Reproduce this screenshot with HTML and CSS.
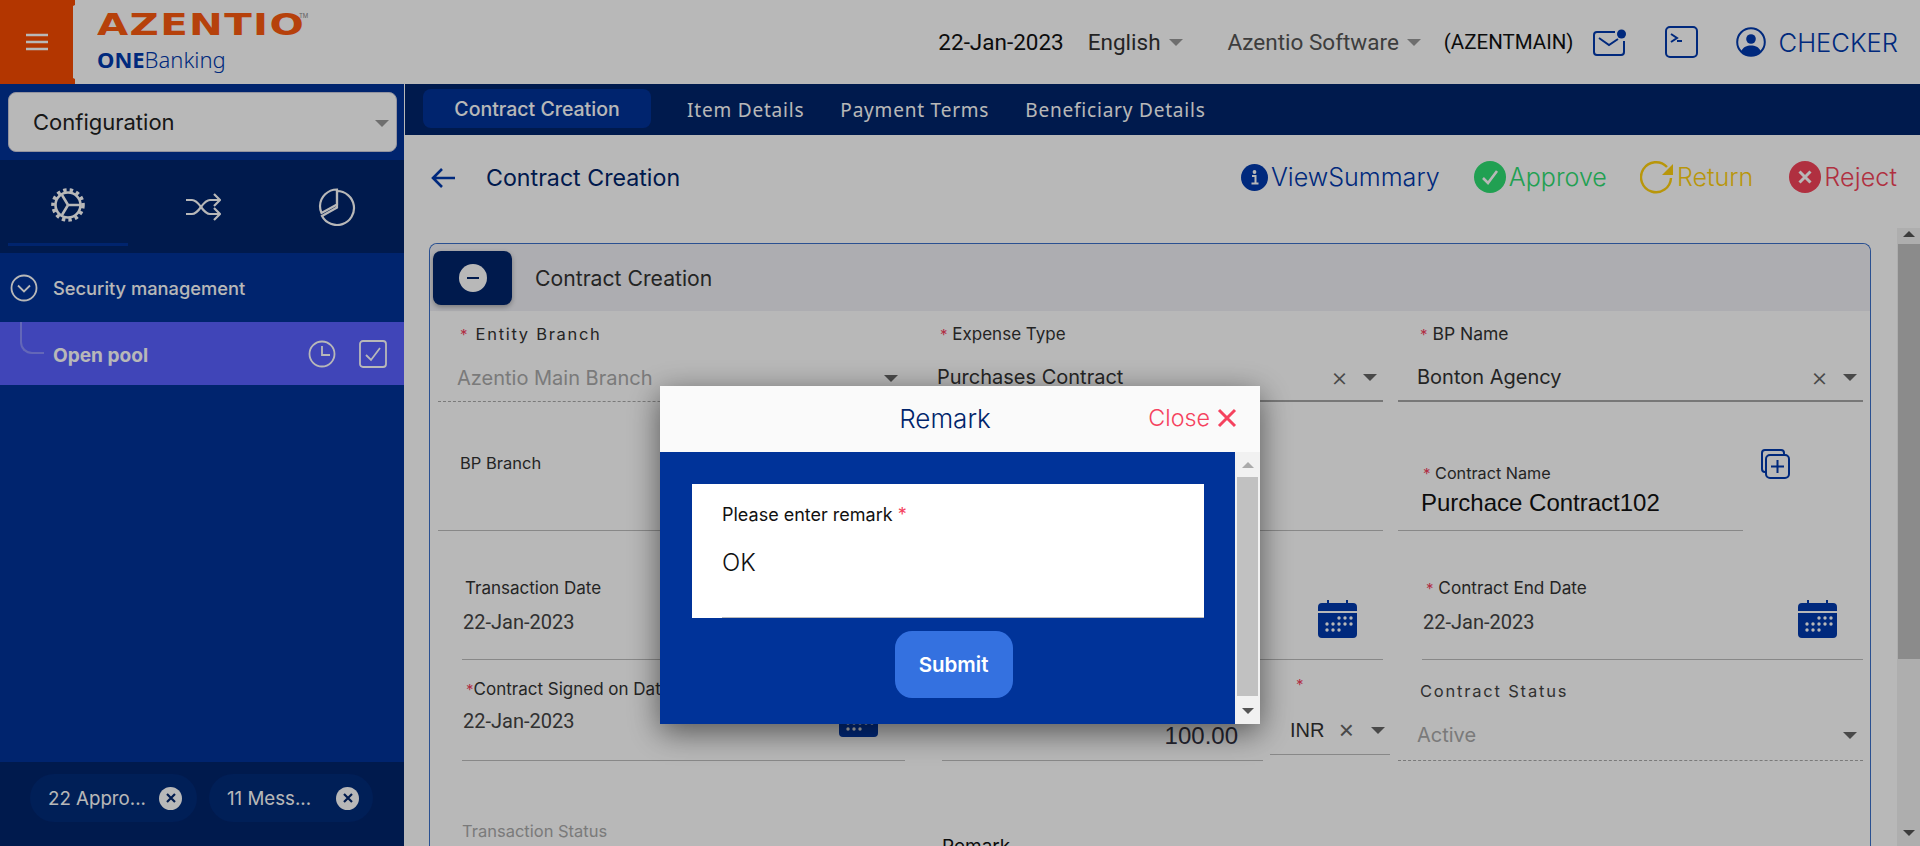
FILE: index.html
```html
<!DOCTYPE html>
<html lang="en">
<head>
<meta charset="utf-8">
<title>Contract Creation</title>
<link rel="stylesheet" href="styles.css">
</head>
<body>
<div class="app">
  <header class="topbar">
    <button class="burger" aria-label="Menu"><svg width="24" height="18" viewBox="0 0 24 18"><path d="M1 2h22M1 9h22M1 16h22" stroke="#fff" stroke-width="2.4"/></svg></button>
    <div class="logo">
      <div class="logo-main"><span class="logo-word">AZENTIO</span><span class="logo-tm">TM</span></div>
      <div class="logo-sub"><b>ONE</b>Banking</div>
    </div>
    <div class="top-right">
      <span class="t-date">22-Jan-2023</span>
      <span class="t-lang">English</span><i class="caret t-c1"></i>
      <span class="t-org">Azentio Software</span><i class="caret t-c2"></i>
      <span class="t-main">(AZENTMAIN)</span>
      <svg class="t-mail" width="34" height="27" viewBox="0 0 34 27" fill="none" stroke="#0039ad" stroke-width="2"><path d="M22 3H4a3 3 0 0 0-3 3v17a3 3 0 0 0 3 3h24a3 3 0 0 0 3-3V12"/><path d="M6 9l10 7 9-6"/><circle cx="28.500" cy="5" r="4.500" fill="#0039ad" stroke="none"/></svg>
      <svg class="t-term" width="33" height="32" viewBox="0 0 33 32" fill="none" stroke="#0039ad" stroke-width="2"><rect x="1" y="1" width="31" height="30" rx="4"/><path d="M6 8l6 4-6 4M12 15h5"/></svg>
      <svg class="t-user" width="30" height="30" viewBox="0 0 30 30"><circle cx="15" cy="15" r="13.800" fill="none" stroke="#0039ad" stroke-width="2"/><circle cx="15" cy="12" r="4.800" fill="#0039ad"/><path d="M5 24.500c2-4.500 6-6 10-6s8 1.500 10 6c-2.500 3-6 4.500-10 4.500s-7.500-1.500-10-4.500z" fill="#0039ad"/></svg>
      <span class="t-user-name">CHECKER</span>
    </div>
  </header>

  <div class="body">
    <aside class="sidebar">
      <div class="sel-wrap">
        <div class="sel"><span>Configuration</span><i class="caret"></i></div>
      </div>
      <nav class="side-tabs">
        <div class="side-tab active">
          <svg width="36" height="36" viewBox="0 0 36 36" fill="none" stroke="#fff"><circle cx="18" cy="18" r="15" stroke-width="3.600" stroke-dasharray="3.400 3.140"/><circle cx="18" cy="18" r="12.500" stroke-width="2.600"/><path d="M18 18L12 8M18 18L12 28M18 18h12" stroke-width="2.600"/></svg>
        </div>
        <div class="side-tab">
          <svg width="36" height="30" viewBox="0 0 36 30" fill="none" stroke="#fff" stroke-width="2.200"><path d="M1 8h6c8 0 10 14 18 14h9M1 22h6c8 0 10-14 18-14h9M29 2l6 6-6 6M29 16l6 6-6 6"/></svg>
        </div>
        <div class="side-tab">
          <svg width="38" height="38" viewBox="0 0 38 38" fill="none" stroke="#fff" stroke-width="2.200"><path d="M19 3a17 17 0 1 1-15 25l15-8.500z"/><path d="M19 1.500A17 17 0 0 0 2 18c0 2.500.5 5 1.500 7l15.500-8.500z"/></svg>
        </div>
      </nav>
      <div class="menu">
        <div class="menu-group">
          <svg width="28" height="28" viewBox="0 0 28 28" fill="none" stroke="#fff" stroke-width="1.800"><circle cx="14" cy="14" r="12.500"/><path d="M8 11.500l6 6 6-6"/></svg>
          <span>Security management</span>
        </div>
        <div class="menu-item">
          <span class="tree"></span>
          <span class="menu-label">Open pool</span>
          <svg class="mi-clock" width="28" height="28" viewBox="0 0 28 28" fill="none" stroke="#fff" stroke-width="1.800"><circle cx="14" cy="14" r="12.500"/><path d="M14 6v9h8"/></svg>
          <svg class="mi-check" width="28" height="28" viewBox="0 0 28 28" fill="none" stroke="#fff" stroke-width="1.800"><rect x="1" y="1" width="26" height="26" rx="3"/><path d="M7 15l5 5 9-12"/></svg>
        </div>
      </div>
      <footer class="side-foot">
        <div class="chip c1"><span>22 Appro...</span><i class="chip-x"><svg width="12" height="12" viewBox="0 0 12 12"><path d="M2 2l8 8M10 2l-8 8" stroke="#00246b" stroke-width="2.200"/></svg></i></div>
        <div class="chip c2"><span>11 Mess...</span><i class="chip-x"><svg width="12" height="12" viewBox="0 0 12 12"><path d="M2 2l8 8M10 2l-8 8" stroke="#00246b" stroke-width="2.200"/></svg></i></div>
      </footer>
    </aside>

    <main class="main">
      <div class="tabs">
        <span class="tab active">Contract Creation</span>
        <span class="tab t2">Item Details</span>
        <span class="tab t3">Payment Terms</span>
        <span class="tab t4">Beneficiary Details</span>
      </div>
      <div class="title-row">
        <svg class="back" width="25" height="22" viewBox="0 0 25 22" fill="none" stroke="#0039ad" stroke-width="2.600"><path d="M24 11H2M11 2l-9 9 9 9"/></svg>
        <h1>Contract Creation</h1>
        <div class="actions">
          <span class="act blue"><svg width="27" height="27" viewBox="0 0 27 27"><circle cx="13.500" cy="13.500" r="13.500" fill="#0039ad"/><path d="M11 12h3.500v7M10.500 19.500h7" stroke="#fff" stroke-width="2" fill="none"/><circle cx="13.500" cy="8" r="1.900" fill="#fff"/></svg>ViewSummary</span>
          <span class="act green"><svg width="32" height="32" viewBox="0 0 32 32"><circle cx="16" cy="16" r="16" fill="#2fde72"/><path d="M9 17l5 5 9-12" fill="none" stroke="#fff" stroke-width="2.600"/></svg>Approve</span>
          <span class="act amber"><svg width="34" height="33" viewBox="0 0 34 33" fill="none"><path d="M27 6A15 15 0 1 0 31 17" stroke="#ffd00e" stroke-width="2.400"/><path d="M33 3v11H22z" fill="#ffd00e"/></svg>Return</span>
          <span class="act red"><svg width="32" height="32" viewBox="0 0 32 32"><circle cx="16" cy="16" r="16" fill="#f44359"/><path d="M10.500 10.500l11 11M21.500 10.500l-11 11" stroke="#fff" stroke-width="3"/></svg>Reject</span>
        </div>
      </div>
      <div class="scroll">
        <div class="scroll-content">
          <section class="card">
            <div class="card-head">
              <button class="toggle" aria-label="Collapse"><svg width="28" height="28" viewBox="0 0 28 28"><circle cx="14" cy="14" r="14" fill="#fff"/><path d="M8 14h12" stroke="#00246b" stroke-width="2"/></svg></button>
              <h2>Contract Creation</h2>
            </div>
            <div class="form">
              <div class="field r1 dotted">
                <label class="lab spaced l-ent"><em>*</em> Entity Branch</label>
                <div class="val muted">Azentio Main Branch<i class="caret end"></i></div>
              </div>
              <div class="field r1 solid">
                <label class="lab l-exp"><em>*</em> Expense Type</label>
                <div class="val v-exp">Purchases Contract<span class="x">×</span><i class="caret"></i></div>
              </div>
              <div class="field r1 solid">
                <label class="lab l-bp"><em>*</em> BP Name</label>
                <div class="val v-bp">Bonton Agency<span class="x">×</span><i class="caret"></i></div>
              </div>

              <div class="field r2">
                <label class="lab l-bpb">BP Branch</label>
              </div>
              <div class="field r2"></div>
              <div class="name-cell">
                <div class="field r2b">
                  <label class="lab"><em>*</em> Contract Name</label>
                  <div class="val big">Purchace Contract102</div>
                </div>
                <svg class="copy" width="30" height="30" viewBox="0 0 30 30" fill="none" stroke="#0039ad" stroke-width="2"><path d="M24 5V4a3 3 0 0 0-3-3H5a3 3 0 0 0-3 3v16a3 3 0 0 0 3 3h1"/><rect x="6" y="6" width="23" height="23" rx="4"/><path d="M17.500 11v13M11 17.500h13"/></svg>
              </div>

              <div class="field r3 inset">
                <label class="lab l-td">Transaction Date</label>
                <div class="val date">22-Jan-2023</div>
              </div>
              <div class="field r3 cal-field">
                <svg class="cal" width="39" height="38" viewBox="0 0 39 38"><use href="#calendar"/></svg>
              </div>
              <div class="field r3 inset cal-field">
                <label class="lab l-end"><em>*</em> Contract End Date</label>
                <div class="val date">22-Jan-2023</div>
                <svg class="cal" width="39" height="38" viewBox="0 0 39 38"><use href="#calendar"/></svg>
              </div>

              <div class="field r4 inset cal-field c4">
                <label class="lab l-signed"><em>*</em>Contract Signed on Date</label>
                <div class="val date">22-Jan-2023</div>
                <svg class="cal" width="39" height="38" viewBox="0 0 39 38"><use href="#calendar"/></svg>
              </div>
              <div class="amount-cell">
                <div class="field r4 amount"><div class="val amt">100.00</div></div>
                <div class="field r4c">
                  <label class="lab cur-lab"><em>*</em></label>
                  <div class="val cur">INR<span class="x">×</span><i class="caret"></i></div>
                </div>
              </div>
              <div class="field r4 dotted">
                <label class="lab spaced status">Contract Status</label>
                <div class="val muted status-v">Active<i class="caret end"></i></div>
              </div>

              <div class="field r5">
                <label class="lab l-ts">Transaction Status</label>
              </div>
              <div class="field r5">
                <label class="lab l-rem">Remark</label>
              </div>
            </div>
          </section>
        </div>
        <div class="vbar">
          <i class="arr up"></i>
          <div class="vthumb"></div>
          <i class="arr down"></i>
        </div>
      </div>
    </main>
  </div>
</div>

<svg class="defs" width="0" height="0" aria-hidden="true">
  <symbol id="calendar" viewBox="0 0 39 38">
    <path d="M4 3h5V0h2v3h17V0h2v3h5a4 4 0 0 1 4 4v4H0V7a4 4 0 0 1 4-4zM0 13h39v21a4 4 0 0 1-4 4H4a4 4 0 0 1-4-4z" fill="#0039ad"/>
    <g fill="#fff"><circle cx="21" cy="18" r="1.700"/><circle cx="27" cy="18" r="1.700"/><circle cx="33" cy="18" r="1.700"/><circle cx="9" cy="24" r="1.700"/><circle cx="15" cy="24" r="1.700"/><circle cx="21" cy="24" r="1.700"/><circle cx="27" cy="24" r="1.700"/><circle cx="33" cy="24" r="1.700"/><circle cx="9" cy="30" r="1.700"/><circle cx="15" cy="30" r="1.700"/><circle cx="21" cy="30" r="1.700"/></g>
  </symbol>
</svg>

<div class="overlay">
  <div class="modal">
    <div class="modal-head">
      <h3>Remark</h3>
      <span class="close">Close<svg width="20" height="20" viewBox="0 0 20 20"><path d="M2 2l16 16M18 2L2 18" stroke="#f5425e" stroke-width="3"/></svg></span>
    </div>
    <div class="modal-body">
      <div class="modal-main">
        <div class="remark-box">
          <label>Please enter remark <em>*</em></label>
          <div class="remark-val">OK</div>
        </div>
        <button class="submit">Submit</button>
      </div>
      <div class="mbar">
        <i class="arr up light"></i>
        <div class="mthumb"></div>
        <i class="arr down"></i>
      </div>
    </div>
  </div>
</div>
</body>
</html>
```
FILE: styles.css
```css
* { box-sizing: border-box; }
html, body { margin: 0; height: 846px; overflow: hidden; background: #fff; }
body { font-family: "Inter", "Liberation Sans", sans-serif; color: #222; }
h1, h2, h3 { margin: 0; font-weight: 400; }
button { border: 0; padding: 0; font: inherit; cursor: pointer; }
i { font-style: normal; }
em { font-style: normal; color: #f5425e; }
.defs { position: absolute; }

.app { display: flex; flex-direction: column; height: 846px; width: 1920px; overflow: hidden; }

.caret { display: inline-block; width: 0; height: 0; border-left: 7px solid transparent; border-right: 7px solid transparent; border-top: 7px solid #999; }

/* top bar */
.topbar { display: flex; height: 84px; flex: none; background: #fff; }
.burger { width: 75px; flex: none; background: #f94b00; display: flex; align-items: center; justify-content: center; padding-right: 2px;
  clip-path: polygon(0 0, 75px 0, 75px 5px, 73px 6px, 73px 78px, 75px 79px, 75px 84px, 0 84px); }
.logo { margin-left: 22px; padding-top: 9px; width: 300px; }
.logo-main { display: flex; height: 30px; align-items: flex-start; }
.logo-word { display: inline-block; font-family: "DejaVu Sans", sans-serif; font-weight: 700; font-size: 30px; line-height: 32px; letter-spacing: 1px; color: #fd5a10; transform: scaleX(1.345); transform-origin: left center; width: 158px; }
.logo-tm { margin-left: 44px; font-size: 6px; line-height: 8px; margin-top: 3px; color: #888; }
.logo-sub { margin-top: 6px; font-family: "Noto Sans", sans-serif; font-size: 22px; line-height: 28px; color: #0039ad; font-weight: 300; }
.logo-sub b { font-weight: 700; }

.top-right { margin-left: auto; display: flex; align-items: center; padding-right: 22px; font-family: "Roboto", sans-serif; font-size: 22.500px; }
.t-date { color: #111; }
.t-lang { margin-left: 24px; color: #333; }
.t-c1 { margin-left: 8px; }
.t-org { margin-left: 45px; color: #555; }
.t-c2 { margin-left: 8px; }
.t-main { margin-left: 23px; font-size: 20.500px; color: #111; }
.t-mail { margin-left: 19px; }
.t-term { margin-left: 38px; }
.t-user { margin-left: 38px; }
.t-user-name { margin-left: 13px; font-family: "Inter", sans-serif; font-size: 25.600px; font-weight: 300; color: #0039ad; }

.body { display: flex; flex: 1; min-height: 0; }

/* sidebar */
.sidebar { width: 404px; flex: none; display: flex; flex-direction: column; background: #003399; }
.sel-wrap { padding: 8px 7px 8px 8px; height: 76px; }
.sel { height: 60px; border-radius: 8px; background: #fff; border: 1px solid #ccd; display: flex; align-items: center; justify-content: space-between; padding: 0 7px 0 24px; font-size: 22px; color: #222; }
.sel .caret { margin-top: 2px; }
.side-tabs { height: 93px; background: #00246b; display: flex; padding-left: 8px; }
.side-tab { width: 120px; height: 86px; flex: none; margin-right: 14.500px; display: flex; align-items: center; justify-content: center; padding-top: 7px; }
.side-tab.active { border-bottom: 3px solid #003399; }
.menu { flex: 1; }
.menu-group { height: 69px; display: flex; align-items: center; padding: 1px 0 0 10px; color: #fff; font-size: 18.300px; font-weight: 500; gap: 15px; }
.menu-item { height: 63px; background: #5960ff; display: flex; align-items: center; padding-left: 53px; position: relative; color: #fff; font-size: 19.100px; font-weight: 700; }
.menu-label { margin-top: 3px; }
.tree { position: absolute; left: 20px; top: 0; width: 24px; height: 32px; border-left: 2px solid #8a8fff; border-bottom: 2px solid #8a8fff; border-bottom-left-radius: 12px; }
.mi-clock { margin-left: auto; }
.mi-check { margin-left: 23px; margin-right: 17px; }
.side-foot { height: 84px; background: #00246b; display: flex; padding: 12px 0 0 30px; gap: 12px; }
.chip { height: 48px; border-radius: 24px; background: #002b79; display: flex; align-items: center; justify-content: space-between; padding: 0 14px 0 18px; color: #fff; font-size: 18.700px; }
.chip.c1 { width: 167px; padding-right: 15px; }
.chip.c2 { width: 164px; }
.chip-x { width: 23px; height: 23px; border-radius: 50%; background: #fff; display: flex; align-items: center; justify-content: center; flex: none; }

/* main */
.main { flex: 1; min-width: 0; margin-left: 1px; display: flex; flex-direction: column; }
.tabs { height: 51px; flex: none; background: #00246b; display: flex; align-items: center; padding-left: 18px; font-family: "Noto Sans", sans-serif; font-size: 19px; color: #fff; letter-spacing: .8px; }
.tab.active { width: 228px; height: 39px; margin-top: -2px; border-radius: 8px; background: #003399; display: flex; align-items: center; justify-content: center; font-family: "Inter", sans-serif; font-weight: 500; font-size: 19.500px; letter-spacing: 0; }
.tab.t2 { margin-left: 36px; }
.tab.t3 { margin-left: 36px; }
.tab.t4 { margin-left: 36px; }

.title-row { height: 108px; flex: none; display: flex; align-items: flex-start; padding: 32px 23px 0 26px; }
.title-row h1 { margin-left: 30px; font-size: 23.200px; line-height: 22px; color: #00246b; }
.actions { margin-left: auto; display: flex; align-items: center; margin-top: -6px; font-size: 25.100px; font-weight: 300; height: 32px; }
.act { display: flex; align-items: center; gap: 3px; }
.act svg { flex: none; }
.act.blue { color: #0039ad; }
.act.green { color: #2fde72; margin-left: 34px; }
.act.amber { color: #ffd00e; margin-left: 33px; }
.act.red { color: #f44359; margin-left: 36px; }
.act.red { letter-spacing: .1px; }

.scroll { flex: 1; min-height: 0; display: flex; }
.scroll-content { flex: 1; min-width: 0; padding: 0 26px 0 24px; overflow: hidden; }
.vbar { width: 23px; flex: none; background: #f1f1f1; display: flex; flex-direction: column; align-items: center; margin-top: -15px; }
.vthumb { width: 100%; height: 415px; margin-top: 7px; margin-left: 2px; background: #c1c1c1; flex: none; }
.arr { flex: none; width: 0; height: 0; border-left: 6px solid transparent; border-right: 6px solid transparent; }
.arr.up { border-bottom: 6px solid #555; }
.arr.down { border-top: 6px solid #555; }
.vbar .arr.up { margin-top: 3px; }
.vbar .arr.down { margin-top: 171px; }

.card { border: 1px solid #3b6fc9; border-bottom: 0; border-radius: 8px 8px 0 0; height: 620px; }
.card-head { height: 67px; background: #f0f0f5; display: flex; align-items: center; padding: 0 0 0 3px; border-radius: 8px 8px 0 0; }
.toggle { width: 79px; height: 54px; border-radius: 8px; background: #00246b; display: flex; align-items: center; justify-content: center; box-shadow: 0 2px 5px rgba(0,0,0,.3); }
.card-head h2 { margin-left: 23px; font-size: 21.200px; color: #333; }

.form { display: grid; grid-template-columns: 467px 463px 465px; column-gap: 15px; grid-template-rows: 91px 129px 129px 101px auto; padding: 0 7px 0 8px; }
.field { display: flex; flex-direction: column; border-bottom: 1px solid #bdbdbd; position: relative; min-width: 0; }
.field.dotted { border-bottom: 1px dashed #aaa; }
.field.solid { border-bottom: 2px solid #a6a6a6; }
.lab { font-size: 16.500px; line-height: 20px; color: #333; white-space: nowrap; }
.lab em { font-size: 15px; }
.val { margin-top: auto; display: flex; align-items: center; font-size: 20px; line-height: 26px; color: #333; white-space: nowrap; }
.val .caret { border-top-color: #666; }
.val .x { margin-left: auto; margin-right: 15px; font-size: 26px; color: #666; font-weight: 300; line-height: 20px; }
.val .caret.end { margin-left: auto; }
.muted { color: #aaa; }
.spaced { letter-spacing: 1.700px; }

.r1 .lab { margin-top: 13px; padding-left: 25px; }
.r1 .val { padding: 0 6px 10px 19px; }
.r1 .val.muted { padding-right: 7px; }
.r1 .lab.l-ent { padding-left: 22px; }
.r1 .l-exp.lab { padding-left: 20px; font-size: 17px; }
.r1 .v-exp.val { padding-left: 17px; }
.r1 .l-bp.lab { padding-left: 22px; font-size: 17.500px; }
.r1 .v-bp.val { padding-left: 19px; }

.r2 .lab { margin-top: 51px; padding-left: 22px; }
.name-cell { display: flex; align-items: flex-start; }
.field.r2b { width: 345px; height: 129px; }
.r2b .lab { margin-top: 61px; padding-left: 25px; font-size: 16.200px; }
.val.big { font-family: "Liberation Sans", sans-serif; font-size: 24px; line-height: 28px; color: #111; padding: 0 0 13px 23px; }
.copy { margin: 47px 0 0 17px; }

.inset { margin-left: 24px; }
.r3 .lab { margin-top: 46px; font-size: 17px; line-height: 22px; padding-left: 3px; }
.r3 .val { padding-bottom: 24px; padding-left: 1px; }
.r3 .lab.l-end { padding-left: 4px; font-size: 17.200px; }
.val.date { font-family: "Roboto", "Inter", sans-serif; font-size: 20px; color: #444; }
.cal-field .cal { position: absolute; right: 26px; bottom: 21px; }
.c4 .cal { right: 27px; bottom: 23px; }
.r4 .lab { margin-top: 18px; font-size: 17px; line-height: 22px; padding-left: 4px; }
.r4 .val { padding-bottom: 26px; padding-left: 1px; }
.l-signed { overflow: hidden; }

.amount-cell { display: flex; margin-left: 22px; width: 448px; gap: 7px; align-items: flex-start; }
.field.amount { width: 321px; height: 101px; flex: none; }
.r4 .val.amt { justify-content: flex-end; padding: 0 25px 11px 0; font-family: "Liberation Sans", sans-serif; font-size: 24px; color: #334; }
.field.r4c { width: 120px; height: 95px; flex: none; }
.r4c .cur-lab { margin-top: 14px; padding-left: 26px; }
.val.cur { font-size: 20px; padding: 0 5px 11px 20px; font-family: "Liberation Sans", sans-serif; }
.val.cur .x { margin: 0 17px 0 auto; }
.status { color: #444; }
.r4 .lab.status { padding-left: 22px; letter-spacing: 1.800px; font-size: 16.500px; margin-top: 20px; }
.r4 .val.status-v { padding: 0 6px 12px 19px; }
.r5 { border-bottom: 0; }
.r5 .lab { padding-left: 24px; margin-top: 60px; }
.l-ts { color: #aaa; }
.r5 .l-rem { margin-top: 76px; padding-left: 0; margin-left: 22px; font-size: 19px; color: #111; }

/* overlay + modal */
.overlay { position: fixed; inset: 0; background: rgba(0,0,0,.28); display: flex; justify-content: center; align-items: flex-start; padding-top: 386px; }
.modal { width: 600px; height: 338px; background: #fff; box-shadow: 0 8px 30px rgba(0,0,0,.55); display: flex; flex-direction: column; }
.modal-head { height: 66px; flex: none; background: #fafafa; position: relative; display: flex; align-items: center; justify-content: center; padding: 0 30px 1px 0; }
.modal-head h3 { font-size: 26px; font-weight: 300; color: #00246b; }
.close { position: absolute; right: 23px; top: 17px; display: flex; align-items: center; gap: 7px; font-size: 23.300px; font-weight: 300; color: #f5425e; line-height: 30px; }
.modal-body { flex: 1; display: flex; min-height: 0; }
.modal-main { flex: 1; background: #003399; padding: 32px 31px 0 32px; display: flex; flex-direction: column; align-items: center; }
.remark-box { width: 512px; height: 134px; background: #fff; padding: 20px 0 0 30px; position: relative; }
.remark-box::after { content: ""; position: absolute; left: 30px; right: 0; bottom: 0; height: 1px; background: #bbb; }
.remark-box label { display: block; font-size: 18px; line-height: 22px; color: #111; }
.remark-box em { font-size: 18px; }
.remark-val { margin-top: 23px; font-size: 24px; line-height: 28px; color: #111; font-weight: 300; }
.submit { margin-top: 13px; margin-left: 11px; width: 118px; height: 67px; border-radius: 17px; background: #3471e0; color: #fff; font-size: 20.500px; font-weight: 600; }
.mbar { width: 25px; flex: none; background: #f1f1f1; display: flex; flex-direction: column; align-items: center; }
.mthumb { width: 21px; height: 219px; margin-top: 9px; background: #c1c1c1; flex: none; }
.arr.light { border-bottom-color: #aaa; margin-top: 10px; }
.mbar .arr.down { margin-top: 12px; }
```
